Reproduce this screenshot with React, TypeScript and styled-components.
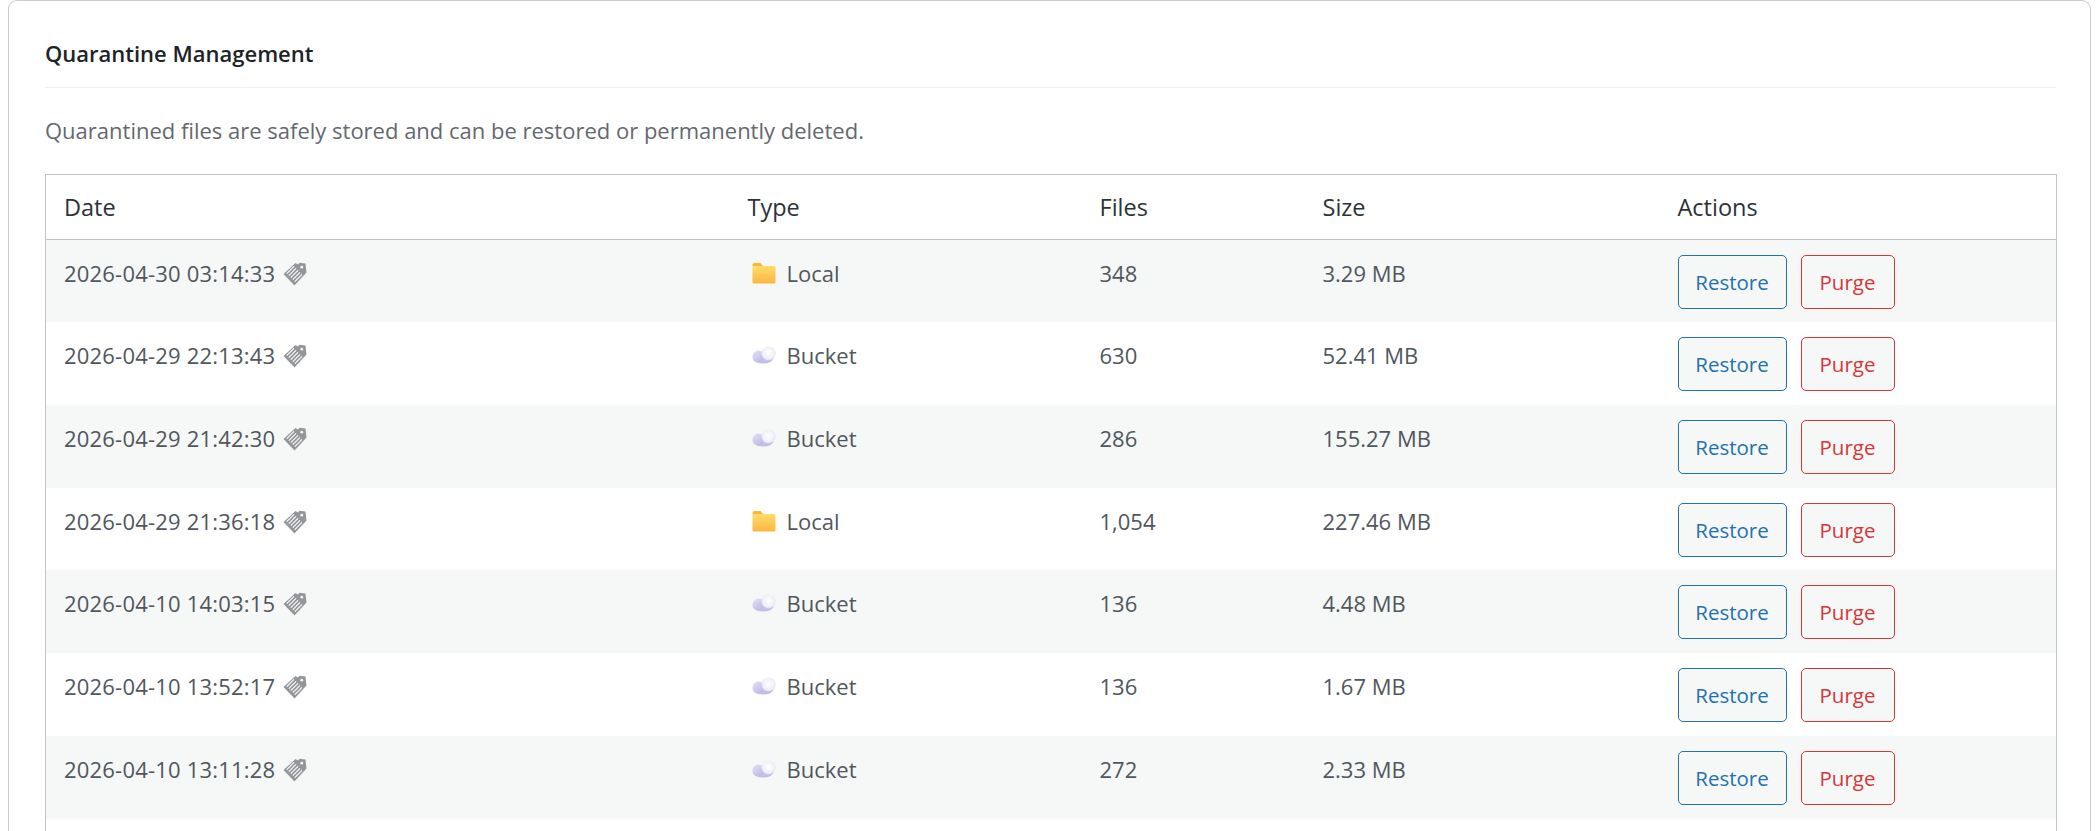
import React from "react";
import styled, { createGlobalStyle } from "styled-components";

const GlobalStyle = createGlobalStyle`
  html,
  body {
    margin: 0;
    height: 831px;
    overflow: hidden;
    background: #fff;
    font-family: "Open Sans", "Noto Sans", sans-serif;
    color: #50575e;
  }
`;

const Card = styled.section`
  margin: 0 6px 0 8px;
  padding: 34px 34px 0 36px;
  border: 1.5px solid #c9cbce;
  border-bottom: 0;
  border-radius: 9px 9px 0 0;
  box-sizing: border-box;
`;

const Title = styled.h2`
  margin: 0;
  padding-bottom: 16px;
  border-bottom: 1.5px solid #eeeff0;
  font-size: 22px;
  line-height: 36px;
  font-weight: 600;
  color: #1d2327;
`;

const Lead = styled.p`
  margin: 24px 0 25.7px;
  font-size: 22px;
  line-height: 36px;
  color: #646970;
`;

const Table = styled.table`
  width: 100%;
  table-layout: fixed;
  border-collapse: collapse;
  border: 1.5px solid #c3c4c7;
`;

const HeadCell = styled.th`
  height: 64px;
  padding: 0 18px;
  border-bottom: 1.5px solid #c3c4c7;
  font-size: 23.5px;
  font-weight: 400;
  text-align: left;
  color: #2c3338;
`;

const Row = styled.tr<{ $striped: boolean }>`
  height: 82.8px;
  background: ${(p) => (p.$striped ? "#f6f7f7" : "#fff")};
`;

const Cell = styled.td`
  padding: 15px 18px 13px;
  vertical-align: top;
  font-size: 22px;
  line-height: 36px;
`;

const DateWrap = styled.span`
  display: inline-flex;
  align-items: center;
  gap: 8px;
  letter-spacing: 0.2px;

  svg {
    margin-top: 2px;
  }
`;

const TypeWrap = styled.span`
  display: inline-flex;
  align-items: center;
  gap: 11px;
  padding-left: 4px;
`;

const ActionsWrap = styled.div`
  display: flex;
  gap: 14px;
`;

const ActionButton = styled.button<{ $tone: "blue" | "red"; $w: number }>`
  width: ${(p) => p.$w}px;
  height: 54px;
  padding: 0;
  border: 1.5px solid ${(p) => (p.$tone === "blue" ? "#2271b1" : "#d63638")};
  border-radius: 5px;
  background: #f6f7f7;
  color: ${(p) => (p.$tone === "blue" ? "#2271b1" : "#d63638")};
  font: inherit;
  font-size: 20.5px;
`;

const TagIcon = () => (
  <svg width="24" height="24" viewBox="0 0 24 24">
    <path d="M12.5 1 15 2.5 16.5 .8 22.5 1.5 23.5 10.5 11.5 23.5 .5 12Z" fill="#94969a" />
    <circle cx="18.8" cy="5.2" r="1.4" fill="#f4f4f4" />
    <path
      d="M3.8 11.6 11 4.4M5.8 13.6 13 6.4M7.8 15.6 15 8.4M9.8 17.6 17 10.4M11.8 19.6 19 12.4"
      stroke="#ffffff"
      strokeWidth="1.1"
    />
  </svg>
);

const FolderIcon = () => (
  <svg width="24" height="22" viewBox="0 0 24 22">
    <defs>
      <linearGradient id="folderFill" x1="0" y1="0" x2="0" y2="1">
        <stop offset="0" stopColor="#ffdc6c" />
        <stop offset="1" stopColor="#fdb63e" />
      </linearGradient>
    </defs>
    <path d="M.5 3C.5 1.8 1.3 1 2.5 1H8.5L11.5 4.5H.5Z" fill="#f9b934" />
    <rect x=".5" y="4" width="23" height="17.5" rx="1.5" fill="url(#folderFill)" />
  </svg>
);

const CloudIcon = () => (
  <svg width="24" height="18" viewBox="0 0 24 18">
    <defs>
      <linearGradient id="cloudBack" x1="0" y1="0" x2="0.7" y2="1">
        <stop offset="0" stopColor="#e4e2f6" />
        <stop offset="1" stopColor="#bdb8e6" />
      </linearGradient>
      <radialGradient id="cloudFront" cx="0.5" cy="0.45" r="0.6">
        <stop offset="0" stopColor="#ffffff" />
        <stop offset="0.7" stopColor="#f0eff9" />
        <stop offset="1" stopColor="#d3d0ee" />
      </radialGradient>
    </defs>
    <ellipse cx="11" cy="12" rx="10.5" ry="5.5" fill="url(#cloudBack)" />
    <circle cx="6.5" cy="10.5" r="6" fill="url(#cloudBack)" />
    <circle cx="16.5" cy="7.5" r="7" fill="url(#cloudFront)" />
  </svg>
);

const rows = [
  { date: "2026-04-30 03:14:33", type: "Local", files: "348", size: "3.29 MB" },
  { date: "2026-04-29 22:13:43", type: "Bucket", files: "630", size: "52.41 MB" },
  { date: "2026-04-29 21:42:30", type: "Bucket", files: "286", size: "155.27 MB" },
  { date: "2026-04-29 21:36:18", type: "Local", files: "1,054", size: "227.46 MB" },
  { date: "2026-04-10 14:03:15", type: "Bucket", files: "136", size: "4.48 MB" },
  { date: "2026-04-10 13:52:17", type: "Bucket", files: "136", size: "1.67 MB" },
  { date: "2026-04-10 13:11:28", type: "Bucket", files: "272", size: "2.33 MB" },
];

export default function App() {
  return (
    <>
      <GlobalStyle />
      <Card>
        <Title>Quarantine Management</Title>
        <Lead>Quarantined files are safely stored and can be restored or permanently deleted.</Lead>
        <Table>
          <colgroup>
            <col width="684" />
            <col width="352" />
            <col width="223" />
            <col width="355" />
            <col width="397" />
          </colgroup>
          <thead>
            <tr>
              <HeadCell>Date</HeadCell>
              <HeadCell>Type</HeadCell>
              <HeadCell>Files</HeadCell>
              <HeadCell>Size</HeadCell>
              <HeadCell>Actions</HeadCell>
            </tr>
          </thead>
          <tbody>
            {rows.map((row, i) => (
              <Row key={row.date} $striped={i % 2 === 0}>
                <Cell>
                  <DateWrap>
                    {row.date}
                    <TagIcon />
                  </DateWrap>
                </Cell>
                <Cell>
                  <TypeWrap>
                    {row.type === "Local" ? <FolderIcon /> : <CloudIcon />}
                    {row.type}
                  </TypeWrap>
                </Cell>
                <Cell>{row.files}</Cell>
                <Cell>{row.size}</Cell>
                <Cell>
                  <ActionsWrap>
                    <ActionButton $tone="blue" $w={109}>Restore</ActionButton>
                    <ActionButton $tone="red" $w={94}>Purge</ActionButton>
                  </ActionsWrap>
                </Cell>
              </Row>
            ))}
            <Row $striped={false}>
              <Cell colSpan={5} />
            </Row>
          </tbody>
        </Table>
      </Card>
    </>
  );
}
